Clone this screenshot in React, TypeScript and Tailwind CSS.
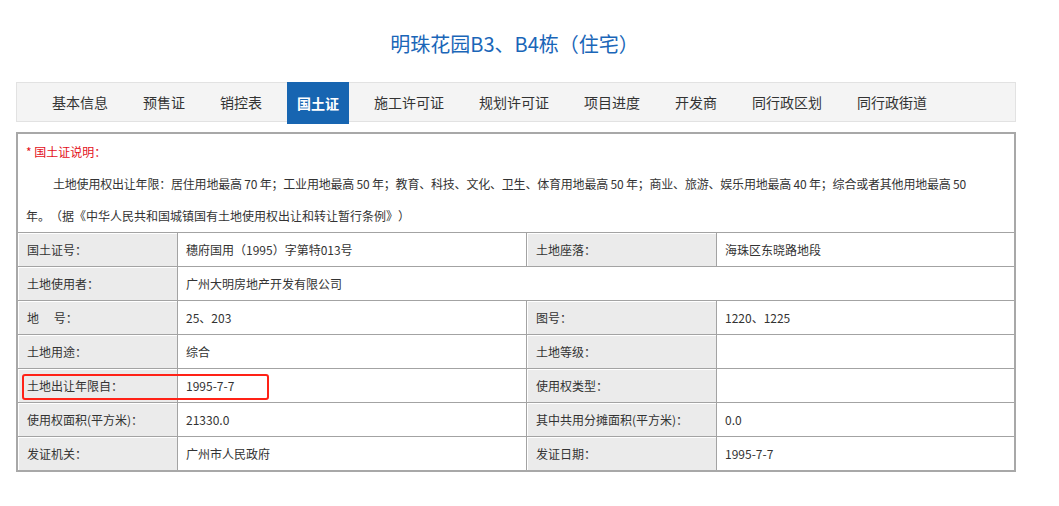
import React from "react";

const tabs = [
  "基本信息",
  "预售证",
  "销控表",
  "国土证",
  "施工许可证",
  "规划许可证",
  "项目进度",
  "开发商",
  "同行政区划",
  "同行政街道",
];

const font = { fontFamily: '"Noto Sans CJK SC", "Noto Sans", sans-serif' };

function Label({ children }: { children: React.ReactNode }) {
  return (
    <div className="flex items-center bg-[#ebebeb] border-r border-[#a3a3a3] pl-[9px] shadow-[inset_1px_1px_0_#ffffff]">
      {children}
    </div>
  );
}

function Value({ children, last, span }: { children?: React.ReactNode; last?: boolean; span?: boolean }) {
  return (
    <div
      className={`flex items-center pl-2 ${last ? "" : "border-r border-[#a3a3a3]"} ${span ? "col-span-3" : ""}`}
    >
      {children}
    </div>
  );
}

export default function App() {
  return (
    <div className="min-h-screen bg-white text-[#333] pt-[30px]" style={font}>
      <div className="w-[1000px] ml-[16px]">
        <h1 className="text-center text-[20px] leading-[28px] text-[#1a66b8] pr-[3px] mb-[24px]">
          明珠花园B3、B4栋（住宅）
        </h1>

        <div className="flex items-start h-[40px] bg-[#f4f4f4] border border-[#e2e2e2] pl-[25px] gap-[15px] mb-[10px]">
          {tabs.map((t) =>
            t === "国土证" ? (
              <div
                key={t}
                className="-mt-px h-[42px] px-[10px] flex items-center bg-[#1765b1] text-white text-[14px] font-bold"
              >
                {t}
              </div>
            ) : (
              <div key={t} className="h-[38px] px-[10px] flex items-center text-[14px] text-[#333]">
                {t}
              </div>
            )
          )}
        </div>

        <div className="border-2 border-[#a8a8a8] text-[12px]">
          <div className="pt-[2px] px-[8px]">
            <div className="leading-[32px] text-[#e3101a]">* 国土证说明：</div>
            <p className="leading-[32px] whitespace-nowrap indent-[27px] tracking-[-0.2px]">
              土地使用权出让年限：居住用地最高 70 年；工业用地最高 50 年；教育、科技、文化、卫生、体育用地最高 50 年；商业、旅游、娱乐用地最高 40 年；综合或者其他用地最高 50
            </p>
            <p className="leading-[32px] whitespace-nowrap [text-spacing-trim:space-all]">
              年。（据《中华人民共和国城镇国有土地使用权出让和转让暂行条例》）
            </p>
          </div>

          <div className="grid grid-cols-[160px_349px_190px_1fr]">
            <div className="col-span-4 grid grid-cols-subgrid h-[34px] border-t border-[#a3a3a3]">
              <Label>国土证号：</Label>
              <Value>穗府国用（1995）字第特013号</Value>
              <Label>土地座落：</Label>
              <Value last>海珠区东晓路地段</Value>
            </div>
            <div className="col-span-4 grid grid-cols-subgrid h-[34px] border-t border-[#a3a3a3]">
              <Label>土地使用者：</Label>
              <Value last span>广州大明房地产开发有限公司</Value>
            </div>
            <div className="col-span-4 grid grid-cols-subgrid h-[34px] border-t border-[#a3a3a3]">
              <Label>地　 号：</Label>
              <Value>25、203</Value>
              <Label>图号：</Label>
              <Value last>1220、1225</Value>
            </div>
            <div className="col-span-4 grid grid-cols-subgrid h-[34px] border-t border-[#a3a3a3]">
              <Label>土地用途：</Label>
              <Value>综合</Value>
              <Label>土地等级：</Label>
              <Value last />
            </div>
            <div className="relative col-span-4 grid grid-cols-subgrid h-[34px] border-t border-[#a3a3a3]">
              <Label>土地出让年限自：</Label>
              <Value>1995-7-7</Value>
              <Label>使用权类型：</Label>
              <Value last />
              <div className="absolute left-[4px] top-[5px] w-[247px] h-[26px] border-2 border-[#ff2217] rounded-[3px]" />
            </div>
            <div className="col-span-4 grid grid-cols-subgrid h-[34px] border-t border-[#a3a3a3]">
              <Label>使用权面积(平方米)：</Label>
              <Value>21330.0</Value>
              <Label>其中共用分摊面积(平方米)：</Label>
              <Value last>0.0</Value>
            </div>
            <div className="col-span-4 grid grid-cols-subgrid h-[34px] border-t border-[#a3a3a3]">
              <Label>发证机关：</Label>
              <Value>广州市人民政府</Value>
              <Label>发证日期：</Label>
              <Value last>1995-7-7</Value>
            </div>
          </div>
        </div>
      </div>
    </div>
  );
}
